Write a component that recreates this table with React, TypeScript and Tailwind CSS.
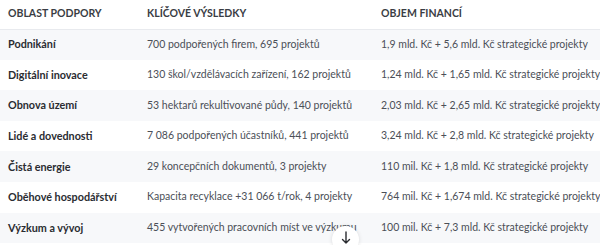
import React from "react";

const rows = [
  ["Podnikání", "700 podpořených firem, 695 projektů", "1,9 mld. Kč + 5,6 mld. Kč strategické projekty"],
  ["Digitální inovace", "130 škol/vzdělávacích zařízení, 162 projektů", "1,24 mld. Kč + 1,65 mld. Kč strategické projekty"],
  ["Obnova území", "53 hektarů rekultivované půdy, 140 projektů", "2,03 mld. Kč + 2,65 mld. Kč strategické projekty"],
  ["Lidé a dovednosti", "7 086 podpořených účastníků, 441 projektů", "3,24 mld. Kč + 2,8 mld. Kč strategické projekty"],
  ["Čistá energie", "29 koncepčních dokumentů, 3 projekty", "110 mil. Kč + 1,8 mld. Kč strategické projekty"],
  ["Oběhové hospodářství", "Kapacita recyklace +31 066 t/rok, 4 projekty", "764 mil. Kč + 1,674 mld. Kč strategické projekty"],
  ["Výzkum a vývoj", "455 vytvořených pracovních míst ve výzkumu", "100 mil. Kč + 7,3 mld. Kč strategické projekty"],
];

export default function App() {
  return (
    <div className="relative w-[600px] h-[245px] overflow-hidden bg-white font-['Lato',sans-serif]">
      <table className="w-full border-collapse table-fixed">
        <colgroup>
          <col className="w-[139px]" />
          <col className="w-[234px]" />
          <col />
        </colgroup>
        <thead>
          <tr className="h-[29px] border-b border-[#e8eaee] bg-white">
            <th className="pl-2 text-left text-[10.5px] font-bold uppercase text-[#3a3d44]">Oblast podpory</th>
            <th className="pl-2 text-left text-[10.5px] font-bold uppercase text-[#3a3d44]">Klíčové výsledky</th>
            <th className="pl-2 text-left text-[10.5px] font-bold uppercase text-[#3a3d44]">Objem financí</th>
          </tr>
        </thead>
        <tbody>
          {rows.map((r, i) => (
            <tr key={r[0]} className={i % 2 === 0 ? "h-[30.6px] bg-[#f7f8fa]" : "h-[30.6px] bg-white"}>
              <td className="pl-2 text-[10.8px] font-bold text-[#2a2c31] whitespace-nowrap">{r[0]}</td>
              <td className="pl-2 text-[10.5px] text-[#4b4f57] whitespace-nowrap overflow-hidden">{r[1]}</td>
              <td className="pl-2 text-[10.5px] text-[#4b4f57] whitespace-nowrap">{r[2]}</td>
            </tr>
          ))}
        </tbody>
      </table>
      <div className="absolute left-[332px] top-[226px] flex h-[27px] w-[27px] items-start justify-center rounded-full bg-white pt-[5px] shadow-[0_0_4px_rgba(0,0,0,0.12)]">
        <svg width="10" height="13" viewBox="0 0 10 13" fill="none" stroke="#2a2c31" strokeWidth="1.4" strokeLinecap="round" strokeLinejoin="round">
          <path d="M5 1v11M1.5 8.5 5 12l3.5-3.5" />
        </svg>
      </div>
    </div>
  );
}
